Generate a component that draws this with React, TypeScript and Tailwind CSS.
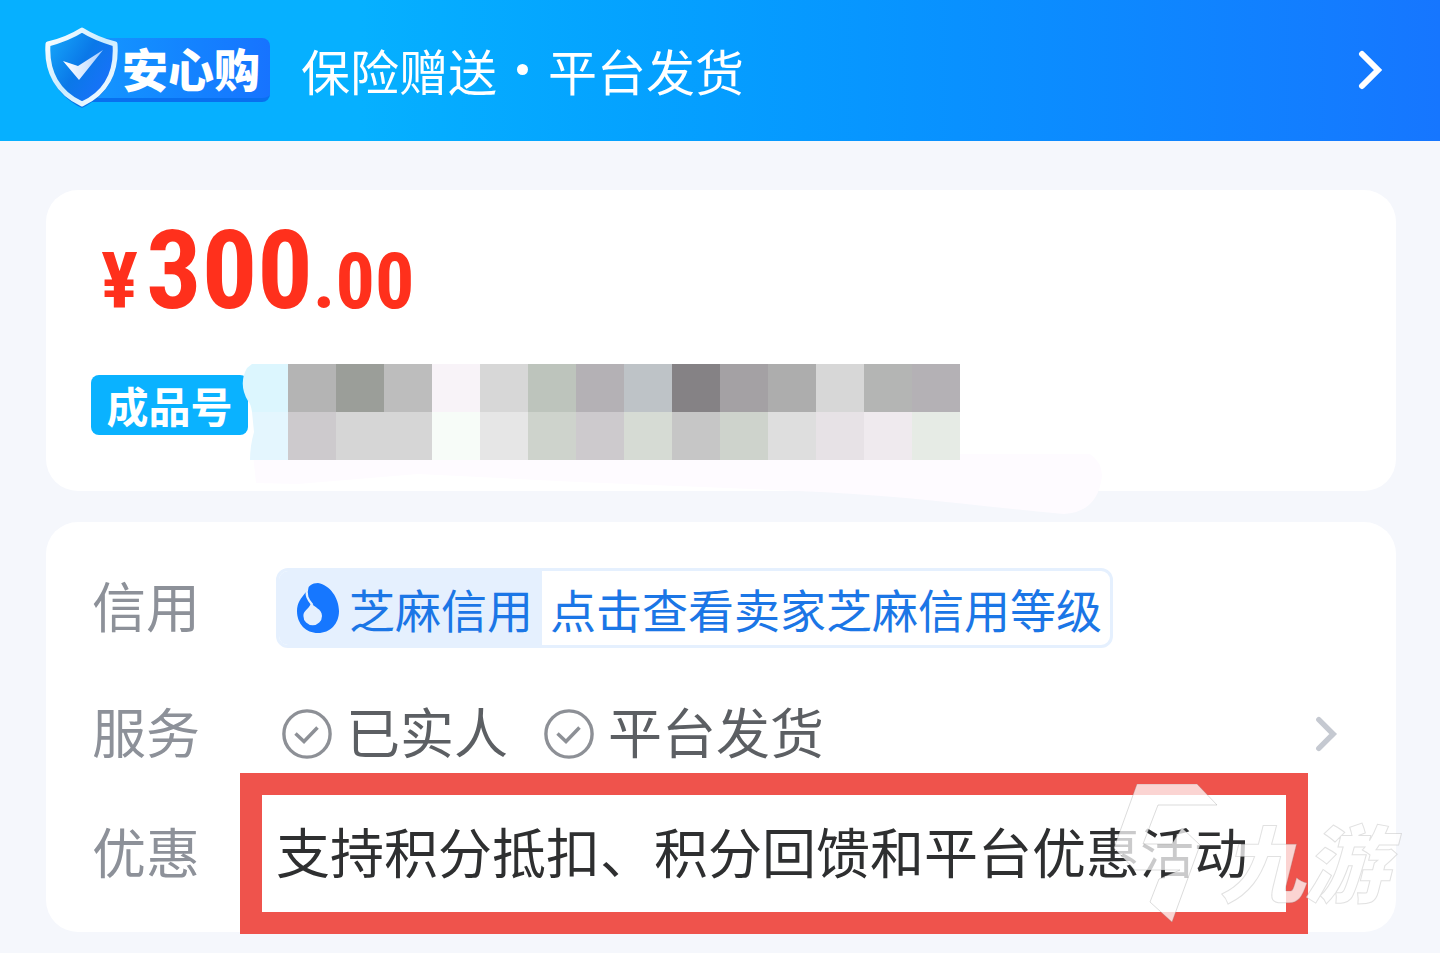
import type { ReactNode } from "react";

const mosaic = [
  ["#b4b4b4", "#9b9e99", "#bdbdbd", "#f8f3f8", "#d7d7d7", "#bdc4bc", "#b4b1b5", "#bec3c7", "#858285", "#a4a1a4", "#adadad", "#d7d7d7", "#b4b5b4", "#b4b1b5"],
  ["#cdcacd", "#d6d6d6", "#d6d6d6", "#f7fcf8", "#e6e6e6", "#ced3cc", "#cdcacd", "#d6dbd4", "#c6c6c6", "#ced3cc", "#dedede", "#e7e2e6", "#efeaee", "#e6ebe5"],
];

function ShieldIcon() {
  return (
    <svg className="absolute -top-[2px] left-0 h-[84px] w-[78px]" viewBox="0 0 78 84" aria-hidden="true">
      <defs>
        <linearGradient id="shield" x1="0" y1="0.1" x2="1" y2="0.8">
          <stop offset="0" stopColor="#16a8fb" />
          <stop offset="0.5" stopColor="#0a78e8" />
          <stop offset="1" stopColor="#1c70ff" />
        </linearGradient>
        <linearGradient id="rim" x1="0" y1="0" x2="1" y2="1">
          <stop offset="0" stopColor="#ffffff" />
          <stop offset="0.5" stopColor="#c9ecff" />
          <stop offset="1" stopColor="#ffffff" />
        </linearGradient>
        <linearGradient id="tick" x1="0" y1="0" x2="1" y2="0">
          <stop offset="0" stopColor="#ffffff" />
          <stop offset="0.6" stopColor="#d4e6ff" />
          <stop offset="1" stopColor="#a4cbff" />
        </linearGradient>
      </defs>
      <path d="M38 6C49 14 60 18 73 20C75 48 63 70 38 82C13 70 1 48 3 20C15 18 27 14 38 6Z" fill="#0873e6" />
      <path d="M38 4C49 11 60 15 71 18C73 46 62 67 38 78C14 67 2 46 4 18C16 15 27 11 38 4Z" fill="url(#shield)" stroke="url(#rim)" strokeWidth="5" strokeLinejoin="round" />
      <path d="M19 35L34 40L59 24L35 54Z" fill="url(#tick)" />
    </svg>
  );
}

function Chevron({ className }: { className: string }) {
  return (
    <svg className={className} viewBox="0 0 24 40" fill="none" stroke="currentColor" aria-hidden="true">
      <path d="M4 4L20 20L4 36" strokeWidth="6" strokeLinecap="round" />
    </svg>
  );
}

function CheckBadge() {
  return (
    <svg className="size-[50px] shrink-0 text-[#8d9096]" viewBox="0 0 50 50" fill="none" stroke="currentColor" strokeWidth="3.4" aria-hidden="true">
      <circle cx="25" cy="25" r="23.1" />
      <path d="M13.5 24.5L22 32.5L35.5 18.5" strokeWidth="3.5" />
    </svg>
  );
}

function DropIcon() {
  return (
    <svg className="h-[50px] w-[42px] shrink-0" viewBox="0 0 42 50" aria-hidden="true">
      <path d="M9 9C11 3 15 0 21 0C33 2 42 15 42 28C42 41 33 50 21 50C9 50 0 41 0 28C0 20 4 15 9 9Z" fill="#1677ff" />
      <path d="M10.5 4C8 12 11 17 15.500 22" fill="none" stroke="#e5f0fe" strokeWidth="2.200" />
      <path d="M14 20C17 24 25 26 25 33A9.300 9.300 0 0 1 6.400 33C6.400 27.500 11.500 26 13.500 21.500Z" fill="#e5f0fe" />
    </svg>
  );
}

function Row({ label, children }: { label: string; children: ReactNode }) {
  return (
    <div className="flex h-[120px] items-center">
      <dt className="w-[184px] shrink-0 pb-[6px] text-[54px] leading-[80px] text-[#8d9199]">{label}</dt>
      <dd className="flex min-w-0 flex-1 items-center">{children}</dd>
    </div>
  );
}

function Smudge() {
  return (
    <svg className="absolute left-0 top-0 h-[160px] w-[864px]" viewBox="0 0 864 160" aria-hidden="true">
      <path d="M15 90H852Q864 98 864 112Q860 148 826 150C740 142 650 130 560 127L340 118L180 110L60 120L18 119Z" fill="#fefbff" />
      <path d="M14 0H50V48H14Q13 40 10 37Q0 20 9 4Z" fill="#dcf6fe" />
      <path d="M14 48H50V96H12Q12 82 16 68Z" fill="#e4f6fe" />
      {mosaic.map((row, y) =>
        row.map((fill, x) => <rect key={`${x}-${y}`} x={50 + x * 48} y={y * 48} width="48" height="48" fill={fill} shapeRendering="crispEdges" />),
      )}
    </svg>
  );
}

function Watermark() {
  return (
    <div className="pointer-events-none absolute -right-1 bottom-2 flex h-[140px] w-[288px] items-end justify-end pr-3 pb-[14px] text-white/75">
      <svg className="absolute left-0 top-0 h-[140px] w-[110px]" viewBox="0 0 110 140" fill="currentColor" stroke="#888" strokeOpacity="0.5" strokeWidth="0.6" aria-hidden="true">
        <path d="M25 0H85L105 21H46L31 60H60L70 44L88 61L60 138L38 118L47 95L68 86H23L2 64Z" />
      </svg>
      <span className="text-[84px] leading-[100px] font-black italic [-webkit-text-stroke:1px_#88888840]">九游</span>
    </div>
  );
}

export default function App() {
  return (
    <div className="min-h-screen overflow-hidden bg-[#f5f7fc] font-['Noto_Sans_CJK_SC',sans-serif] font-normal">
      <header>
        <button type="button" className="flex h-[141px] w-full items-center bg-linear-to-r from-[#06b0ff] from-25% to-[#1676ff] pr-[57px] pb-[2px] pl-[44px] text-white">
          <span className="relative flex h-[84px] w-[226px] items-center justify-end">
            <span className="flex h-[64px] w-[190px] items-center justify-end rounded-lg border-b-4 border-[#0870ef] bg-linear-to-r from-[#1598ff] to-[#1773ff] pr-[10px] pb-[2px] text-[46px] leading-[56px] font-black">
              安心购
            </span>
            <ShieldIcon />
          </span>
          <span className="ml-[31px] flex items-center text-[49px] leading-[72px]">
            保险赠送<span className="mx-5 size-[11px] rounded-full bg-white" />平台发货
          </span>
          <Chevron className="ml-auto h-[40px] w-[26px]" />
        </button>
      </header>

      <main className="flex flex-col gap-[31px] pt-[49px] pr-[44px] pl-[46px]">
        <section className="relative z-10 h-[301px] rounded-[32px] bg-white pt-[16px] pl-[45px]">
          <p className="pl-[10px] font-['Roboto_Condensed',sans-serif] text-[78px] leading-[130px] font-bold text-[#ff301c]">
            ¥<span className="ml-2 text-[110px]">300</span>.00
          </p>
          <div className="relative mt-[28px] flex">
            <span className="flex h-[60px] w-[157px] items-center justify-center rounded-lg bg-[#0ab2ff] text-[42px] leading-[60px] font-bold text-white">成品号</span>
            <div className="absolute -top-[11px] left-[147px]">
              <Smudge />
            </div>
          </div>
        </section>

        <section className="relative rounded-[32px] bg-white px-[46px] pt-[26px] pb-[18px]">
          <dl className="flex flex-col">
            <Row label="信用">
              <a href="#credit" className="flex h-[80px] items-center overflow-hidden rounded-xl border-[3px] border-[#e5f0fe] text-[46px] leading-[74px] text-[#1b76e6]">
                <span className="flex h-full items-center gap-[10px] bg-[#e5f0fe] pr-[9px] pl-[18px]">
                  <DropIcon />
                  芝麻信用
                </span>
                <span className="pr-2 pl-2">点击查看卖家芝麻信用等级</span>
              </a>
            </Row>
            <div className="mt-[6px]">
              <Row label="服务">
                <button type="button" className="flex flex-1 items-center pr-[12px] pl-[6px] text-[54px] leading-[80px] text-[#5c5f63]">
                  <CheckBadge />
                  <span className="mr-9 ml-[14px] pb-[6px]">已实人</span>
                  <CheckBadge />
                  <span className="ml-[14px] pb-[6px]">平台发货</span>
                  <Chevron className="ml-auto h-[36px] w-[24px] text-[#c5c9d1]" />
                </button>
              </Row>
            </div>
            <div className="relative">
              <Row label="优惠">
                <span className="pb-[6px] text-[54px] leading-[80px] whitespace-nowrap text-[#2e2f30]">支持积分抵扣、积分回馈和平台优惠活动</span>
              </Row>
              <div className="absolute -top-[21px] right-[42px] -bottom-[20px] left-[148px] border-[22px] border-[#ef534c]" />
            </div>
          </dl>
          <Watermark />
        </section>
      </main>
    </div>
  );
}
